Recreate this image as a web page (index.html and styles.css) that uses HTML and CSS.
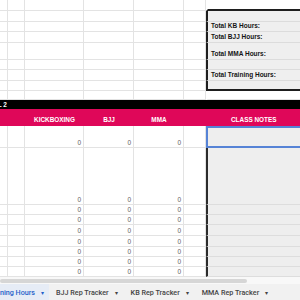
FILE: index.html
```html
<!DOCTYPE html>
<html>
<head>
<meta charset="utf-8">
<link rel="stylesheet" href="styles.css">
</head>
<body>
<div class="sheet">
  <div class="row r11"><div class="c"></div><div class="c"></div><div class="c"></div><div class="c"></div><div class="c"></div><div class="c"></div><div class="c box-top"></div></div>
  <div class="row r11"><div class="c"></div><div class="c"></div><div class="c"></div><div class="c"></div><div class="c"></div><div class="c"></div><div class="c box"></div></div>
  <div class="row r10"><div class="c"></div><div class="c"></div><div class="c"></div><div class="c"></div><div class="c"></div><div class="c"></div><div class="c box label">Total KB Hours:</div></div>
  <div class="row r11"><div class="c"></div><div class="c"></div><div class="c"></div><div class="c"></div><div class="c"></div><div class="c"></div><div class="c box label">Total BJJ Hours:</div></div>
  <div class="row r17"><div class="c"></div><div class="c"></div><div class="c"></div><div class="c"></div><div class="c"></div><div class="c"></div><div class="c box label">Total MMA Hours:</div></div>
  <div class="row r10"><div class="c"></div><div class="c"></div><div class="c"></div><div class="c"></div><div class="c"></div><div class="c"></div><div class="c box"></div></div>
  <div class="row r11"><div class="c"></div><div class="c"></div><div class="c"></div><div class="c"></div><div class="c"></div><div class="c"></div><div class="c box label">Total Training Hours:</div></div>
  <div class="row r10"><div class="c"></div><div class="c"></div><div class="c"></div><div class="c"></div><div class="c"></div><div class="c"></div><div class="c box box-bottom"></div></div>
  <div class="row r9"><div class="c"></div><div class="c"></div><div class="c"></div><div class="c"></div><div class="c"></div><div class="c"></div><div class="c"></div></div>

  <div class="band black"><span class="band-text">LEVEL 2</span></div>
  <div class="row pink">
    <div class="h"></div><div class="h"></div><div class="h">KICKBOXING</div><div class="h">BJJ</div><div class="h">MMA</div><div class="h"></div><div class="h">CLASS NOTES</div>
  </div>

  <div class="row r22"><div class="c"></div><div class="c"></div><div class="c n">0</div><div class="c n">0</div><div class="c n">0</div><div class="c"></div><div class="c notes selected"></div></div>
  <div class="row r57"><div class="c"></div><div class="c"></div><div class="c n">0</div><div class="c n">0</div><div class="c n">0</div><div class="c"></div><div class="c notes"></div></div>
  <div class="row r10"><div class="c"></div><div class="c"></div><div class="c n">0</div><div class="c n">0</div><div class="c n">0</div><div class="c"></div><div class="c notes"></div></div>
  <div class="row r10"><div class="c"></div><div class="c"></div><div class="c n">0</div><div class="c n">0</div><div class="c n">0</div><div class="c"></div><div class="c notes"></div></div>
  <div class="row r11"><div class="c"></div><div class="c"></div><div class="c n">0</div><div class="c n">0</div><div class="c n">0</div><div class="c"></div><div class="c notes"></div></div>
  <div class="row r11"><div class="c"></div><div class="c"></div><div class="c n">0</div><div class="c n">0</div><div class="c n">0</div><div class="c"></div><div class="c notes"></div></div>
  <div class="row r10"><div class="c"></div><div class="c"></div><div class="c n">0</div><div class="c n">0</div><div class="c n">0</div><div class="c"></div><div class="c notes"></div></div>
  <div class="row r10"><div class="c"></div><div class="c"></div><div class="c n">0</div><div class="c n">0</div><div class="c n">0</div><div class="c"></div><div class="c notes"></div></div>
  <div class="row r10"><div class="c"></div><div class="c"></div><div class="c n">0</div><div class="c n">0</div><div class="c n">0</div><div class="c"></div><div class="c notes"></div></div>
</div>
<div class="scroll"><div class="thumb"></div></div>
<div class="tabs">
  <div class="tab active"><span class="tab-name cut">Training Hours</span><span class="caret">▾</span></div>
  <div class="tab"><span class="tab-name">BJJ Rep Tracker</span><span class="caret">▾</span></div>
  <div class="tab"><span class="tab-name">KB Rep Tracker</span><span class="caret">▾</span></div>
  <div class="tab"><span class="tab-name">MMA Rep Tracker</span><span class="caret">▾</span></div>
</div>
</body>
</html>
```
FILE: styles.css
```css
html, body {
  margin: 0;
  padding: 0;
  width: 300px;
  height: 300px;
  overflow: hidden;
  background: #fff;
  font-family: "Liberation Sans", Arial, sans-serif;
}
.sheet {
  width: 320px;
  height: 277px;
  overflow: hidden;
}
.row {
  display: grid;
  grid-template-columns: 8px 17px 59px 50px 50px 22px 113px;
}
.r9 { height: 9px; }
.r10 { height: 10px; }
.r11 { height: 11px; }
.r17 { height: 17px; }
.r22 { height: 22px; }
.r57 { height: 57px; }
.c {
  box-sizing: border-box;
  border-right: 1px solid #e3e3e3;
  border-bottom: 1px solid #e3e3e3;
  display: flex;
  align-items: flex-end;
  min-width: 0;
}
.row > .c:last-child {
  border-left: 2px solid transparent;
}
.box-top {
  border-bottom: 2px solid #1e1e1e !important;
}
.box {
  background: #efefef;
  border-left: 2px solid #1e1e1e !important;
  border-bottom-color: #dcdcdc;
}
.box-bottom {
  border-bottom: 2px solid #1e1e1e !important;
}
.label {
  font-weight: bold;
  font-size: 6.5px;
  color: #151515;
  padding: 0 0 2px 3px;
  white-space: nowrap;
}
.band {
  height: 9px;
  background: #000;
  display: flex;
  align-items: center;
}
.band-text {
  color: #fff;
  font-weight: bold;
  font-size: 6.4px;
  margin-left: -19px;
  white-space: nowrap;
}
.pink {
  height: 17px;
  background: #df0759;
}
.h {
  color: #fff;
  font-weight: bold;
  font-size: 6.4px;
  display: flex;
  align-items: flex-end;
  justify-content: center;
  padding-bottom: 3px;
  white-space: nowrap;
}
.h:last-child {
  justify-content: flex-start;
  padding-left: 25px;
}
.n {
  justify-content: flex-end;
  font-size: 6.5px;
  color: #616161;
  padding: 0 2px 1px 0;
}
.notes {
  background: #eeeeee;
  border-left: 2px solid #2b2b2b !important;
  border-bottom-color: #dddddd;
}
.notes.selected {
  border: 2px solid #5683d6 !important;
  border-right: none !important;
}
.scroll {
  height: 7px;
  background: #f8f8f8;
  display: flex;
  align-items: center;
}
.thumb {
  width: 247px;
  height: 4px;
  background: #d6d6d6;
  border-radius: 2px;
}
.tabs {
  height: 16px;
  background: #f1f1f1;
  display: flex;
  align-items: stretch;
  font-family: Roboto, "Liberation Sans", sans-serif;
  font-weight: 500;
  font-size: 7.2px;
  color: #444;
}
.tab {
  display: flex;
  align-items: center;
  padding: 0 7px;
  white-space: nowrap;
}
.tab.active {
  background: #e6ecf6;
  color: #1f5fc9;
  width: 49px;
  box-sizing: border-box;
  justify-content: flex-end;
  overflow: hidden;
  padding-right: 5px;
}
.caret {
  font-size: 6px;
  margin-left: 6px;
}
.tab + .tab {
  padding-left: 7px;
  padding-right: 6px;
}
```
